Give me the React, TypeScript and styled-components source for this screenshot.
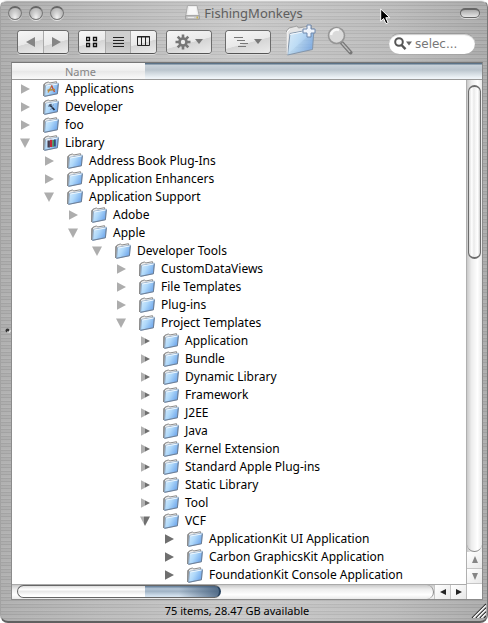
import React from "react";
import styled, { createGlobalStyle, css } from "styled-components";

const SPLIT = 145;

const GlobalStyle = createGlobalStyle`
  * { box-sizing: border-box; }
  html, body, #root { height: 100%; margin: 0; }
  body {
    background: #fff;
    font-family: "Noto Sans", "Open Sans", sans-serif;
    overflow: hidden;
  }
  button, input { font: inherit; color: inherit; margin: 0; padding: 0; border: 0; background: none; }
`;

const Window = styled.main`
  display: flex;
  flex-direction: column;
  height: 100vh;
  border-radius: 7px 7px 8px 8px;
  border: 1px solid #a2a2a2;
  border-top-color: #ededed;
  border-bottom: 2px solid #606060;
  border-right-color: #777;
  background:
    repeating-linear-gradient(180deg, #ffffff22 0 1px, #00000009 1px 2px, #ffffff10 2px 4px, #0000000b 4px 5px, #ffffff18 5px 7px),
    linear-gradient(90deg, #a9a9a9 0%, #b5b5b5 18%, #c6c6c6 50%, #b8b8b8 80%, #a6a6a6 100%);
`;

const TitleBar = styled.header`
  display: grid;
  grid-template-columns: 1fr auto 1fr;
  align-items: center;
  height: 23px;
  padding: 0 7px;
`;

const Lights = styled.div`
  display: flex;
  gap: 7px;
`;

const Light = styled.button`
  width: 14px;
  height: 14px;
  border-radius: 50%;
  border: 1px solid #777;
  border-top: 2px solid #666;
  background: radial-gradient(ellipse at 50% 85%, #f2f2f2 0%, #d0d0d0 40%, #a3a3a3 100%);
  box-shadow: 0 1px 0 #e2e2e2;
`;

const Title = styled.h1`
  display: flex;
  align-items: center;
  gap: 4px;
  margin: 0;
  font-size: 13px;
  font-weight: 400;
  line-height: 18px;
  color: #5e5e5e;
`;

const Pill = styled.button`
  justify-self: end;
  width: 20px;
  height: 10px;
  border: 1px solid #666;
  border-top-width: 2px;
  border-radius: 5px;
  background: linear-gradient(#aaa, #e6e6e6);
  box-shadow: 0 1px 0 #ddd;
`;

const Toolbar = styled.div`
  display: flex;
  align-items: center;
  height: 38px;
  padding: 0 12px 0 16px;
`;

const Group = styled.div<{ $after: number }>`
  display: flex;
  flex: none;
  height: 24px;
  margin-top: -3px;
  margin-right: ${(p) => p.$after}px;
  border: 1px solid #6b6b6b;
  border-bottom-color: #555;
  border-radius: 4px;
  overflow: hidden;
  background: #e4e4e4;
  box-shadow: 0 1px 0 #ddd;
`;

const ToolButton = styled.button<{ $w: number; $on?: boolean }>`
  display: flex;
  align-items: center;
  justify-content: center;
  width: ${(p) => p.$w}px;
  background: ${(p) =>
    p.$on
      ? "linear-gradient(#cfcfcf 50%, #bfbfbf 50%, #d2d2d2)"
      : "linear-gradient(165deg, #f6f6f6 0%, #e9e9e9 52%, #d5d5d5 54%, #ebebeb 100%)"};
  & + & { border-left: 1px solid #aaa; }
`;

const IconButton = styled.button<{ $w: number }>`
  display: flex;
  flex: none;
  width: ${(p) => p.$w}px;
  margin-right: 10px;
  margin-top: -6px;
`;

const Search = styled.label`
  display: flex;
  align-items: center;
  width: 86px;
  height: 21px;
  margin-left: auto;
  padding: 0 8px 0 5px;
  gap: 3px;
  border-radius: 11px;
  background: #fff;
  border-top: 1px solid #999;
  box-shadow: inset 0 1px 1px #ccc;
`;

const SearchInput = styled.input`
  width: 50px;
  min-width: 0;
  font-family: "DejaVu Sans", sans-serif;
  font-size: 12px;
  line-height: 16px;
  color: #777;
  outline: 0;
`;

const Body = styled.section`
  display: flex;
  flex-direction: column;
  flex: 1;
  min-height: 0;
  margin: 0 4px 0 10px;
  background: #fff;
  border: 1px solid #8b8b8b;
  border-top-color: #777;
`;

const ColumnHeader = styled.button`
  flex: none;
  height: 17px;
  padding-left: 53px;
  text-align: left;
  font-size: 11px;
  line-height: 15px;
  color: #858585;
  border-bottom: 1px solid #9a9a9a;
  background:
    linear-gradient(#f9f9f9, #eee 50%, #e8e8e8 52%, #fafafa) 0 0 / ${SPLIT - 12}px 100% no-repeat,
    linear-gradient(#5c7388 0 1px, #c9d2da 2px, #bbc5ce 7px, #c9d2d9 9px, #eff4f8 15px);
`;

const Middle = styled.div`
  display: flex;
  flex: 1;
  min-height: 0;
`;

const Tree = styled.ul`
  flex: 1;
  min-width: 0;
  margin: 0;
  padding: 0;
  overflow: hidden;
  list-style: none;
`;

const Row = styled.li<{ $level: number }>`
  display: flex;
  align-items: center;
  height: 18px;
  padding-left: ${(p) => 8 + p.$level * 24}px;
  font-size: 12px;
  line-height: 18px;
  white-space: nowrap;
  color: #000;
`;

const Disclosure = styled.button`
  display: flex;
  width: 12px;
  margin-right: 11px;
`;

const Label = styled.span`
  margin-left: 6px;
`;

const groove = (dir: string) => css`
  background: linear-gradient(${dir}, #c9c9c9, #ededed 30%, #fff 70%, #e9e9e9);
`;

const VScroll = styled.div`
  display: flex;
  flex-direction: column;
  width: 16px;
  padding-top: 5px;
  border-left: 1px solid #b0b0b0;
  ${groove("90deg")}
`;

const VThumb = styled.div`
  height: 174px;
  margin: 0 1px;
  border: 1px solid #6d6d6d;
  border-width: 2px 1px;
  border-radius: 7px;
  background: linear-gradient(90deg, #d8d8d8, #fff 25%, #e9e9e9 45%, #f6f6f6 60%, #fff 80%, #ccc);
`;

const VTail = styled.div`
  flex: 1;
  border-bottom: 1px solid #888;
  border-radius: 0 0 8px 8px;
`;

const ArrowButton = styled.button<{ $w: number; $h: number }>`
  display: flex;
  align-items: center;
  justify-content: center;
  flex: none;
  width: ${(p) => p.$w}px;
  height: ${(p) => p.$h}px;
  background: linear-gradient(135deg, #fff, #e8e8e8);
  border: 0 solid #c6c6c6;
  border-width: ${(p) => (p.$w > 15 ? "0 0 0 1px" : "0 0 1px 0")};
`;

const HScroll = styled.div`
  display: flex;
  flex: none;
  height: 15px;
  margin-right: 15px;
  padding-left: 5px;
  border-top: 1px solid #aaa;
  border-right: 1px solid #bbb;
  ${groove("180deg")}
`;

const HThumb = styled.div`
  width: 204px;
  height: 13px;
  border: 1px solid #666;
  border-right: 2px solid #29435f;
  border-radius: 7px;
  background:
    linear-gradient(#ddd, #fff 30%, #e9e9e9 50%, #fff 85%) 0 0 / ${SPLIT - 18}px 100% no-repeat,
    linear-gradient(90deg, transparent 80%, #3c5877cc 100%),
    linear-gradient(#5d7792, #b4c5d6 25%, #a0b3c5 48%, #d3e1ee 90%);
`;

const HTail = styled.div`
  flex: 1;
  border-right: 1px solid #888;
  border-radius: 0 8px 8px 0;
`;

const Footer = styled.footer`
  display: grid;
  grid-template-columns: 1fr auto 1fr;
  align-items: center;
  height: 21px;
  padding: 0 1px 0 0;
  font-size: 11px;
  line-height: 18px;
  color: #000;
`;

const Status = styled.span`
  padding-right: 13px;
`;

const Grip = styled.button`
  grid-column: 3;
  justify-self: end;
  display: flex;
`;

const Overlay = styled.svg<{ $x: number; $y: number }>`
  position: fixed;
  left: ${(p) => p.$x}px;
  top: ${(p) => p.$y}px;
  pointer-events: none;
`;

type Badge = "apps" | "dev" | "books" | undefined;

const FolderIcon = ({ badge }: { badge?: Badge }) => (
  <svg width="16" height="16" viewBox="0 0 16 16" aria-hidden="true" style={undefined}>
    <path d="M.8 15V3.5L2 2.2 5.6.9l1 1.1L13.5.7l.3 1.6" fill="#ececec" stroke="#8b8b8b" />
    <path d="M.8 15 1.2 3.8 2.4 2.6" fill="none" stroke="#777" />
    <path d="M2.6 4.4 15.4 2.2 14.4 12.6 1.6 15.3z" fill="url(#folderBlue)" stroke="#7f9dbd" strokeWidth=".8" />
    <path d="M3.2 5 14.8 3" stroke="#eff8ff" />
    <path d="M1.4 15.4 14.4 12.8 15.3 3" fill="none" stroke="#5f7189" strokeWidth=".8" />
    {badge === "apps" && (
      <g fill="none" strokeWidth="1.4">
        <path d="M5 11.5 9 4.5" stroke="#c7873f" />
        <path d="M8.5 4.5 11.5 11" stroke="#c04b3c" />
        <path d="M4.5 9.3 12 8.5" stroke="#b7873b" />
      </g>
    )}
    {badge === "dev" && (
      <g fill="none">
        <path d="M6.5 5.5 11.5 11" stroke="#222b3b" strokeWidth="1.8" />
        <path d="M5.5 7.5 8.5 5" stroke="#4a5972" strokeWidth="1.4" />
        <path d="M10.5 5.5 7.5 11" stroke="#7a90b0" />
      </g>
    )}
    {badge === "books" && (
      <g>
        <path d="M4.5 5.5h2.4v7H4.5z" fill="#4a3c4c" />
        <path d="M7 4.8h2.4V12H7z" fill="#c6283a" />
        <path d="M9.4 5H11v6.8H9.4z" fill="#3f9658" />
        <path d="M11 4.6h1.8v6.8H11z" fill="#394878" />
      </g>
    )}
  </svg>
);

const Triangle = ({ open, level }: { open: boolean; level: number }) => {
  const fill = level < 5 ? "#adadad" : level === 5 ? "url(#twoTone)" : "#6f6f6f";
  return (
    <svg width="12" height="12" viewBox="0 0 12 12" aria-hidden="true">
      <path d={open ? "M0 1.5h10L5 11z" : "M1 1.2v9.6L10 6z"} fill={fill} />
    </svg>
  );
};

interface Item {
  name: string;
  level: number;
  open?: boolean;
  badge?: Badge;
}

const items: Item[] = [
  { name: "Applications", level: 0, badge: "apps" },
  { name: "Developer", level: 0, badge: "dev" },
  { name: "foo", level: 0 },
  { name: "Library", level: 0, open: true, badge: "books" },
  { name: "Address Book Plug-Ins", level: 1 },
  { name: "Application Enhancers", level: 1 },
  { name: "Application Support", level: 1, open: true },
  { name: "Adobe", level: 2 },
  { name: "Apple", level: 2, open: true },
  { name: "Developer Tools", level: 3, open: true },
  { name: "CustomDataViews", level: 4 },
  { name: "File Templates", level: 4 },
  { name: "Plug-ins", level: 4 },
  { name: "Project Templates", level: 4, open: true },
  { name: "Application", level: 5 },
  { name: "Bundle", level: 5 },
  { name: "Dynamic Library", level: 5 },
  { name: "Framework", level: 5 },
  { name: "J2EE", level: 5 },
  { name: "Java", level: 5 },
  { name: "Kernel Extension", level: 5 },
  { name: "Standard Apple Plug-ins", level: 5 },
  { name: "Static Library", level: 5 },
  { name: "Tool", level: 5 },
  { name: "VCF", level: 5, open: true },
  { name: "ApplicationKit UI Application", level: 6 },
  { name: "Carbon GraphicsKit Application", level: 6 },
  { name: "FoundationKit Console Application", level: 6 },
  { name: "", level: 4 },
];

const Caret = () => (
  <svg width="8" height="5" viewBox="0 0 8 5" aria-hidden="true"><path d="M0 0h8L4 5z" fill="#777" /></svg>
);

const Arrow = ({ d, fill }: { d: string; fill: string }) => (
  <svg width="8" height="8" viewBox="0 0 8 8" aria-hidden="true"><path d={d} fill={fill} /></svg>
);

export default function App() {
  return (
    <>
      <GlobalStyle />
      <svg width="0" height="0" aria-hidden="true" display="block">
        <defs>
          <linearGradient id="folderBlue" x1="0" y1="0" x2="1" y2="0.5">
            <stop offset="0" stopColor="#d9eefd" />
            <stop offset=".5" stopColor="#b0d9fa" />
            <stop offset="1" stopColor="#72a9ec" />
          </linearGradient>
          <linearGradient id="twoTone">
            <stop offset=".45" stopColor="#b0b0b0" />
            <stop offset=".45" stopColor="#6f6f6f" />
          </linearGradient>
        </defs>
      </svg>
      <Window>
        <TitleBar>
          <Lights>
            <Light aria-label="Close" />
            <Light aria-label="Minimize" />
            <Light aria-label="Zoom" />
          </Lights>
          <Title>
            <svg width="15" height="15" viewBox="0 0 15 15" aria-hidden="true">
              <path d="M2.5.5h9.5L14.3 11H.7z" fill="#ededed" stroke="#aaa" />
              <path d="M4 2h7l1 7-9 .5z" fill="#f8f8f8" />
              <path d="M.7 10.8h13.6v3.4H.7z" fill="#cfcfcf" stroke="#999" />
              <path d="M3 12.5h6" stroke="#e8e8e8" />
              <path d="M11.5 12.5h1.5" stroke="#c9b24a" strokeWidth="2" />
            </svg>
            FishingMonkeys
          </Title>
          <Pill aria-label="Toggle toolbar" />
        </TitleBar>
        <Toolbar>
          <Group $after={9}>
            <ToolButton $w={25} aria-label="Back">
              <svg width="9" height="10" viewBox="0 0 9 10"><path d="M9 0v10L0 5z" fill="#858585" /></svg>
            </ToolButton>
            <ToolButton $w={25} aria-label="Forward">
              <svg width="9" height="10" viewBox="0 0 9 10"><path d="M0 0v10l9-5z" fill="#858585" /></svg>
            </ToolButton>
          </Group>
          <Group $after={9}>
            <ToolButton $w={26} aria-label="Icon view">
              <svg width="12" height="12" viewBox="0 0 12 12" fill="none" stroke="#111">
                <path d="M.5 1.5h3v3h-3zM7.5 1.5h3v3h-3zM.5 7.5h3v3h-3zM7.5 7.5h3v3h-3z" strokeWidth="1.3" />
              </svg>
            </ToolButton>
            <ToolButton $w={25} $on aria-label="List view" aria-pressed="true">
              <svg width="11" height="11" viewBox="0 0 11 11" stroke="#222"><path d="M0 1.5h11M0 4.5h11M0 7.5h11M0 10.5h11" /></svg>
            </ToolButton>
            <ToolButton $w={26} aria-label="Column view">
              <svg width="13" height="11" viewBox="0 0 13 11" fill="none" stroke="#222"><path d="M.5 .5h12v9h-12zM4.5 0v10M8.5 0v10M0 1h13" /></svg>
            </ToolButton>
          </Group>
          <Group $after={13}>
            <ToolButton $w={44} aria-label="Action">
              <svg width="16" height="16" viewBox="0 0 16 16" aria-hidden="true">
                <g stroke="#777" strokeWidth="2.6">
                  <path d="M8 .5v15M.5 8h15M2.7 2.7l10.6 10.6M13.3 2.7 2.7 13.3" />
                </g>
                <circle cx="8" cy="8" r="4.8" fill="#777" />
                <circle cx="8" cy="8" r="2.2" fill="#ececec" />
              </svg>
              &nbsp;<Caret />
            </ToolButton>
          </Group>
          <Group $after={14}>
            <ToolButton $w={44} aria-label="Arrange">
              <svg width="16" height="10" viewBox="0 0 16 10" stroke="#777"><path d="M0 .5h9M3 3.5h8M6 6.5h8M4 9.5h8" /></svg>
              &nbsp;<Caret />
            </ToolButton>
          </Group>
          <IconButton $w={32} aria-label="New folder">
            <svg width="32" height="32" viewBox="0 0 32 32">
              <path d="M1.5 31V7L4 4l8-2 1.5 2 13-2.5V9" fill="#e5e5e5" stroke="#a0a0a0" />
              <path d="M5 9.5 29 5l-1.5 20.5L2.5 31z" fill="url(#folderBlue)" fillOpacity=".75" stroke="#8496aa" />
              <path d="M5 10.5 28 6" stroke="#f3f8fd" />
              <path d="M2 30.5V8l3-3" fill="none" stroke="#fafafa" />
              <path d="M22 1h4v4h4v4h-4v4h-4V9h-4V5h4z" fill="#eef3fa" stroke="#6f88ad" />
            </svg>
          </IconButton>
          <IconButton $w={26} aria-label="Find">
            <svg width="26" height="30" viewBox="0 0 26 30">
              <path d="m15 18 8.5 9.5" stroke="#777" strokeWidth="4" strokeLinecap="round" />
              <path d="m15 18 8 9" stroke="#bdbdbd" strokeWidth="1.3" />
              <circle cx="9.5" cy="10.5" r="8" fill="#dadada" stroke="#969696" strokeWidth="1.6" />
              <path d="M4 10a6 6 0 0 1 8-5" fill="none" stroke="#f8f8f8" strokeWidth="2.5" />
            </svg>
          </IconButton>
          <Search>
            <svg width="18" height="13" viewBox="0 0 18 13" aria-hidden="true">
              <circle cx="5" cy="5" r="3.8" fill="none" stroke="#555" strokeWidth="2" />
              <path d="m7.5 8 4 4.2" stroke="#555" strokeWidth="2.4" />
              <path d="M12 4.5h6l-3 4z" fill="#666" />
            </svg>
            <SearchInput aria-label="Search" defaultValue="selec..." />
          </Search>
        </Toolbar>
        <Body>
          <ColumnHeader>Name</ColumnHeader>
          <Middle>
            <Tree role="tree" aria-label="Files">
              {items.map((item, i) => (
                <Row key={i} $level={item.level} role="treeitem" aria-level={item.level + 1} aria-expanded={!!item.open}>
                  <Disclosure aria-label={item.open ? "Collapse" : "Expand"}>
                    <Triangle open={!!item.open} level={item.level} />
                  </Disclosure>
                  <FolderIcon badge={item.badge} />
                  <Label>{item.name}</Label>
                </Row>
              ))}
            </Tree>
            <VScroll>
              <VThumb />
              <VTail />
              <ArrowButton $w={15} $h={17} aria-label="Scroll up"><Arrow d="M4 0 7 7H1z" fill="#858585" /></ArrowButton>
              <ArrowButton $w={15} $h={15} aria-label="Scroll down"><Arrow d="M1 1h6L4 8z" fill="#858585" /></ArrowButton>
            </VScroll>
          </Middle>
          <HScroll>
            <HThumb />
            <HTail />
            <ArrowButton $w={16} $h={14} aria-label="Scroll left"><Arrow d="M7 1v6L1 4z" fill="#222" /></ArrowButton>
            <ArrowButton $w={16} $h={14} aria-label="Scroll right"><Arrow d="M1 1v6l6-3z" fill="#222" /></ArrowButton>
          </HScroll>
        </Body>
        <Footer>
          <span />
          <Status>75 items, 28.47 GB available</Status>
          <Grip aria-label="Resize">
            <svg width="15" height="15" viewBox="0 0 15 15">
              <path d="M1 15 15 1M5 15 15 5M9 15l6-6M13 15l2-2" stroke="#333" strokeWidth="1.2" />
              <path d="M2.4 15 15 2.4M6.4 15 15 6.4M10.4 15l4.6-4.6" stroke="#fff" strokeWidth="1.2" />
            </svg>
          </Grip>
        </Footer>
      </Window>
      <Overlay $x={380} $y={8} width="12" height="17" viewBox="0 0 12 17" aria-hidden="true">
        <path d="M.7 1v12.2l2.9-2.7 2.3 5.2 2.2-1-2.3-5h4z" fill="#000" stroke="#fff" />
      </Overlay>
      <Overlay $x={5} $y={328} width="6" height="5" viewBox="0 0 6 5" aria-hidden="true">
        <circle cx="2.5" cy="2.5" r="2" fill="#333" />
        <path d="M2 4h3V2" stroke="#fff" fill="none" />
      </Overlay>
    </>
  );
}
